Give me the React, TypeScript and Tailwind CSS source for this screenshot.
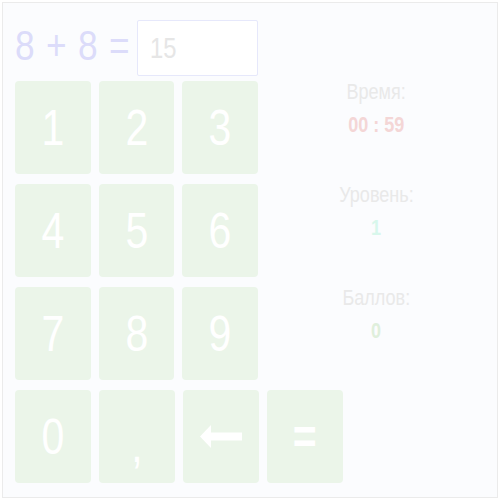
import React from "react";

const font = "font-['Liberation_Sans',Arial,sans-serif]";

// narrow glyphs: the reference uses a condensed face, so squeeze Liberation Sans
const Narrow = ({ children, className = "" }: { children: React.ReactNode; className?: string }) => (
  <span className={`inline-block scale-x-[0.82] whitespace-nowrap ${className}`}>{children}</span>
);

const Key = ({ children, bold = false }: { children: React.ReactNode; bold?: boolean }) => (
  <div
    className={`flex h-[93px] w-[76px] items-center justify-center rounded-[4px] bg-[#ebf5e9] text-[50px] leading-none text-white ${
      bold ? "font-bold" : ""
    }`}
  >
    {children}
  </div>
);

const BackArrow = () => (
  <svg width="42" height="23" viewBox="0 0 42 23" fill="#ffffff">
    <polygon points="0,11.5 11,0 11,23" />
    <rect x="10" y="7.5" width="32" height="8" />
  </svg>
);

const Stat = ({ label, value, color }: { label: string; value: string; color: string }) => (
  <div className="flex flex-col items-center text-[22px] leading-[33px]">
    <Narrow className="text-[#e9e9e9]">{label}</Narrow>
    <Narrow className={`font-bold ${color}`}>{value}</Narrow>
  </div>
);

export default function App() {
  const rows = [
    ["1", "2", "3"],
    ["4", "5", "6"],
    ["7", "8", "9"],
  ];

  return (
    <div className={`h-[500px] w-[500px] bg-white p-[2px] ${font}`}>
      <div className="h-[496px] w-[496px] border border-[#ebebeb] bg-[#fbfcfe] pl-[12px] pt-[17px]">
        <div className="flex">
          <div className="flex w-[243px] flex-col">
            <div className="flex h-[56px] items-center">
              <div className="-mt-[6px] w-[122px] text-[43px] leading-none text-[#dcdcfa]">
                <Narrow className="origin-left tracking-[1px]">8 + 8 =</Narrow>
              </div>
              <div className="flex h-[56px] w-[122px] items-center rounded-[2px] border border-[#e6e8fb] bg-white pl-[12px] text-[29px] leading-none text-[#e6e6e6]">
                <Narrow className="origin-left">15</Narrow>
              </div>
            </div>
            <div className="mt-[5px] flex flex-col gap-[10px]">
              {rows.map((row, i) => (
                <div key={i} className="flex gap-2">
                  {row.map((k) => (
                    <Key key={k}>
                      <Narrow>{k}</Narrow>
                    </Key>
                  ))}
                </div>
              ))}
            </div>
          </div>
          <div className="flex flex-1 flex-col items-center gap-[37px] pr-[2px] pt-[55px]">
            <Stat label="Время:" value="00 : 59" color="text-[#f4d6d6]" />
            <Stat label="Уровень:" value="1" color="text-[#d8f7ec]" />
            <Stat label="Баллов:" value="0" color="text-[#dfefdc]" />
          </div>
        </div>
        <div className="mt-[10px] flex gap-2">
          <Key>
            <Narrow>0</Narrow>
          </Key>
          <Key>
            <Narrow className="mt-[16px]">,</Narrow>
          </Key>
          <Key>
            <BackArrow />
          </Key>
          <Key bold>
            <Narrow>=</Narrow>
          </Key>
        </div>
      </div>
    </div>
  );
}
